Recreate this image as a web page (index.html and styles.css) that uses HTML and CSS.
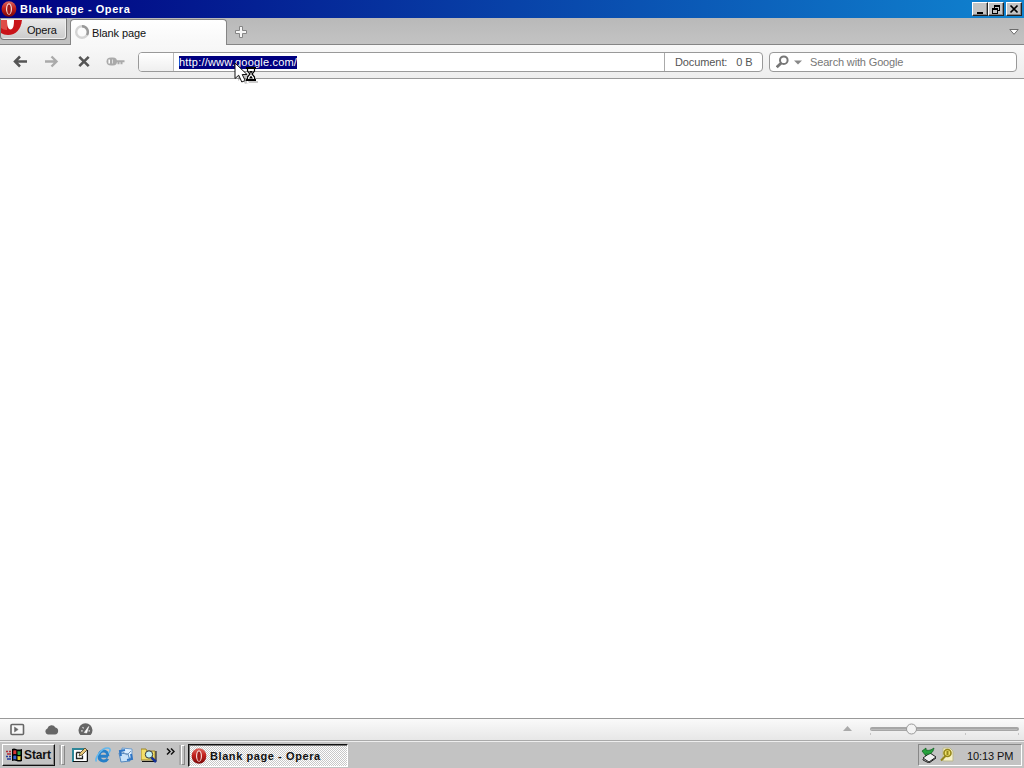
FILE: index.html
```html
<!DOCTYPE html>
<html lang="en">
<head>
  <meta charset="UTF-8">
  <title>Blank page - Opera</title>
  <link rel="stylesheet" href="styles.css">
</head>
<body>
  <svg width="0" height="0" class="defs">
    <defs>
      <linearGradient id="red" x1="0" y1="0" x2="0" y2="1">
        <stop offset="0" stop-color="#dc6860"/><stop offset=".45" stop-color="#c3201d"/><stop offset="1" stop-color="#790808"/>
      </linearGradient>
      <symbol id="opera" viewBox="0 0 16 16">
        <ellipse cx="8" cy="8" rx="7.4" ry="7.7" fill="url(#red)"/>
        <ellipse cx="8" cy="8" rx="3" ry="5.8" fill="#f5dcda"/>
        <ellipse cx="8" cy="8.3" rx="1.8" ry="4.8" fill="#a51a18"/>
      </symbol>
    </defs>
  </svg>

  <div class="titlebar">
    <svg class="title-icon" width="16" height="16"><use href="#opera"/></svg>
    <span class="title-text">Blank page - Opera</span>
    <div class="win-buttons">
      <span class="win-btn"><svg width="12" height="10" shape-rendering="crispEdges"><path d="M3 8h6v2H3z"/></svg></span>
      <span class="win-btn"><svg width="12" height="10" shape-rendering="crispEdges"><path d="M4 1h6v6H8V6h1V3H5v1H4zM2 4h6v6H2zM3 6v3h4V6z" fill-rule="evenodd"/></svg></span>
      <span class="win-btn close"><svg width="12" height="10"><path d="M2.5 1.5l7 7M9.5 1.5l-7 7" stroke="#000" stroke-width="1.7"/></svg></span>
    </div>
  </div>

  <div class="tabbar">
    <div class="opera-menu">
      <svg width="22" height="17"><path d="M0 1h21C20 10 15 16 7 16 4 16 2 15 0 14z" fill="#c91419"/><path d="M0 1h6v10c-3 0-4-1-6-2z" fill="#df4c48"/><path d="M6 1h7c0 6-1 9.500-3.500 9.500S6 7 6 1z" fill="#fff"/></svg>
      <span>Opera</span>
    </div>
    <div class="tab">
      <svg width="16" height="16"><circle cx="7" cy="7" r="5.8" fill="none" stroke="#d4d4d4" stroke-width="2.4"/><path d="M7 1.2A5.8 5.8 0 0 1 12 10" fill="none" stroke="#999" stroke-width="2.4"/></svg>
      <span>Blank page</span>
    </div>
    <svg class="new-tab" width="14" height="14"><path d="M5.500 1.500h3v4h4v3h-4v4h-3v-4h-4v-3h4z" fill="#f5f5f5" stroke="#858585"/></svg>
    <svg class="tab-menu" width="10" height="8"><path d="M.8 1.500h8.400L5 6.300z" fill="#fff" stroke="#6c6c6c"/></svg>
  </div>

  <div class="toolbar">
    <div class="nav">
      <svg width="16" height="14"><path d="M15 6.500H3M8 1.500l-5 5 5 5" fill="none" stroke="#555" stroke-width="2.500"/></svg>
      <svg width="16" height="14"><path d="M1 6.500h11M7.500 1.500l5 5-5 5" fill="none" stroke="#aaa" stroke-width="2.400"/></svg>
      <svg width="16" height="14"><path d="M4.300 1.800l9.400 9.400M13.700 1.800l-9.400 9.400" stroke="#555" stroke-width="2.600"/></svg>
      <svg width="20" height="14"><path d="M6 2.500h2q4 0 4 4t-4 4H6Q1.500 10.500 1.500 6.500t4.500-4z" fill="#aaa"/><path d="M4.200 4.500v4" stroke="#fff" stroke-width="1.500"/><path d="M7.500 4.500v4" stroke="#ddd"/><path d="M10 6.300h9.500M13.500 6.500v2.700M16.500 6.500v2.700" stroke="#aaa" stroke-width="2"/></svg>
    </div>
    <div class="address">
      <span class="badge"></span>
      <span class="url"><span class="selected">http://www.google.com/</span></span>
      <span class="progress"><span>Document:</span><span>0 B</span></span>
    </div>
    <div class="search">
      <svg width="14" height="14"><circle cx="7.800" cy="5.200" r="3.800" fill="none" stroke="#777" stroke-width="2"/><path d="M5.200 8L.7 12.300" stroke="#777" stroke-width="2.800"/></svg>
      <svg class="drop" width="8" height="5"><path d="M0 .5h8L4 4.500z" fill="#888"/></svg>
      <span>Search with Google</span>
    </div>
  </div>

  <div class="page"></div>

  <div class="statusbar">
    <svg width="15" height="13"><rect x="1" y="1.500" width="12.500" height="10" rx="1" fill="#f8f8f8" stroke="#666" stroke-width="1.600"/><path d="M4.500 4v5l3.700-2.500z" fill="#666" stroke="#777" stroke-width=".6"/></svg>
    <svg width="15" height="13"><path d="M3.800 11.500a3.200 3.200 0 0 1-.4-6.100 4.300 4.300 0 0 1 8-.8 3.500 3.500 0 0 1-.4 6.900z" fill="#666"/></svg>
    <svg width="15" height="13"><path d="M2.400 12A7 7 0 1 1 12.600 12z" fill="#666"/><path d="M3 7.800h1.800M4.500 4.200l1.200 1.200M10.500 7.800H12" stroke="#ddd" stroke-width="1.200"/><path d="M6.300 9.500l4.400-6-2 6.500z" fill="#fff" stroke="#fff" stroke-width=".6"/></svg>
    <svg class="zoom" width="181" height="20"><path d="M3 12h9L7.500 7z" fill="#aaa"/><rect x="30" y="8" width="149" height="4" rx="2" fill="#a6a6a6"/><path d="M31 10.500h146" stroke="#bbb"/><path d="M30.500 14v2M125.500 14v2M178.500 14v2" stroke="#c5c5c5"/><circle cx="71.500" cy="10" r="5" fill="#f3f3f3" stroke="#999"/></svg>
  </div>

  <div class="taskbar">
    <div class="start">
      <svg width="17" height="16"><path d="M6 2q2-1 4 0t6 0v12q-3 1-5.500 0T6 14z" fill="#000"/><path d="M7.300 3.500q1.500-.7 3 0v3.800q-1.500-.5-3 0z" fill="#d93535"/><path d="M11.500 3.900q1.500.6 3 .1v3.700q-1.500.5-3 0z" fill="#28a04b"/><path d="M7.300 8.800q1.500-.5 3 0v3.800q-1.500-.5-3 0z" fill="#3562d4"/><path d="M11.500 9q1.500.6 3 .1v3.700q-1.500.5-3 0z" fill="#e8cc30"/><path d="M0 4.500h2M3 4.500h2M1 7h4" stroke="#b42b35" stroke-width="1.500"/><path d="M0 9.500h2M3 9.500h2M1 12h4" stroke="#283d9c" stroke-width="1.500"/></svg>
      <span>Start</span>
    </div>
    <span class="grip"></span>
    <div class="quick">
      <svg width="16" height="16"><path d="M0 1h12v14H0z" fill="#2e8698"/><path d="M2 3h12v11H2z" fill="#fff"/><path d="M1 14.500h14.500V3" fill="none" stroke="#111"/><path d="M4.500 5.500v6h6v-3M4.500 5.500h4" fill="none" stroke="#222" stroke-width="1.300"/><path d="M7 9l1-3 5-5 2 2-5 5z" fill="#eac979" stroke="#413720" stroke-width=".8"/></svg>
      <svg width="16" height="16"><path d="M13 9.300H4.500M13 9.300c0-7-9-7-9 0 0 5.500 6.500 6 8.800 2.400" fill="none" stroke="#267fc8" stroke-width="2.900"/><path d="M1.500 14.500C-1 12 7-1 14 1.200c2 1 1 3-.5 5" fill="none" stroke="#61b7ee" stroke-width="1.500"/></svg>
      <svg width="16" height="16"><path d="M4 1l10 1v9H4z" fill="#dceeff" stroke="#6e9ccc"/><path d="M1 6l9 1 2 7-9 1z" fill="#c8e1f8" stroke="#5288c0"/><path d="M7 3L2 4l1 5M9 13l5-1-1-5" fill="none" stroke="#2e75c5" stroke-width="2"/><path d="M5 5l4 3 4-4" fill="none" stroke="#7798bd"/></svg>
      <svg width="16" height="16"><path d="M0 2h5l1 2h8v9H0z" fill="#f3df68" stroke="#9b852b"/><path d="M1 14.500h14V4" fill="none" stroke="#111"/><path d="M10 10l5 5" stroke="#163399" stroke-width="2.500"/><circle cx="8" cy="7.500" r="3.700" fill="#c5f1f4" stroke="#333"/></svg>
      <svg class="more" width="9" height="7"><path d="M1 .5l3 3-3 3M5 .5l3 3-3 3" fill="none" stroke="#111" stroke-width="1.500"/></svg>
    </div>
    <span class="grip second"></span>
    <div class="task">
      <svg width="16" height="16"><use href="#opera"/></svg>
      <span>Blank page - Opera</span>
    </div>
    <div class="tray">
      <svg width="16" height="16"><path d="M2 11l7-5 6 4-7 5z" fill="#eee" stroke="#222"/><path d="M2 12v1l6 3 7-5" fill="none" stroke="#222"/><path d="M1 4l4-3v2c3 1 5 0 8-2-1 5-4 7-8 6v2z" fill="#27a23d" stroke="#075b19" stroke-width=".7"/></svg>
      <svg width="16" height="16"><path d="M4 1h7l3 3v10H4z" fill="#f6f1c5" stroke="#bcb991"/><circle cx="8.500" cy="6" r="3.500" fill="#eee06a" stroke="#95871b" stroke-width="1.600"/><path d="M6.500 9L2 13.500M8.500 4v4" stroke="#94861b" stroke-width="2"/></svg>
      <span class="clock">10:13 PM</span>
    </div>
  </div>

  <!-- busy pointer -->
  <svg class="cursor" width="25" height="23"><path d="M4 4v15l4-3 3 6 4-1-3-6h5zM13 19h11v2H13z" fill="#666" opacity=".35"/><path d="M1 1v15.500l3.700-3.300L7.800 20l3.400-1.500-3-6H13z" fill="#fff" stroke="#111"/><path d="M12 6h10M12 18h10" stroke="#000" stroke-width="2"/><path d="M13.500 6.500v2.500l2.500 3-2.500 3v2.500h7V15L18 12l2.500-3V6.500z" fill="#fff" stroke="#000" stroke-width="1.200"/><path d="M15 9h4L17 11.500zM17 13.500l2 3h-4z"/></svg>
</body>
</html>
```
FILE: styles.css
```css
* {
  box-sizing: border-box;
}
body {
  margin: 0;
  width: 1024px;
  height: 768px;
  overflow: hidden;
  display: flex;
  flex-direction: column;
  background: #fff;
  font: 11px "Liberation Sans", Arial, sans-serif;
  color: #111;
  white-space: nowrap;
}
svg {
  display: block;
  flex: none;
}
.defs {
  position: absolute;
}
.titlebar {
  height: 18px;
  display: flex;
  align-items: center;
  padding: 0 2px 0 1px;
  background: linear-gradient(90deg, #000080, #1084d0);
  color: #fff;
}
.title-text {
  margin-left: 3px;
  font-weight: bold;
  letter-spacing: 0.56px;
}
.win-buttons {
  display: flex;
  margin-left: auto;
}
.win-btn {
  width: 16px;
  height: 14px;
  padding: 1px;
  background: #c4c4c4;
  border: 1px solid;
  border-color: #fff #222 #222 #fff;
  box-shadow: inset -1px -1px #888;
}
.close {
  margin-left: 2px;
}
.tabbar {
  height: 27px;
  display: flex;
  background: linear-gradient(#b9b9b9, #c3c3c3);
  border-bottom: 1px solid #858585;
}
.opera-menu {
  width: 67px;
  height: 22px;
  display: flex;
  background: linear-gradient(#e9e9e9, #cbcbcb);
  border: 1px solid #777;
  border-top-color: #aaa;
  border-radius: 0 0 4px 4px;
  box-shadow: inset -1px -1px #eee;
}
.opera-menu span {
  margin-left: 4px;
  line-height: 22px;
  letter-spacing: -0.2px;
}
.tab {
  width: 157px;
  height: 27px;
  margin: 1px 0 0 3px;
  padding: 5px 0 0 4px;
  display: flex;
  background: linear-gradient(#fff, #f7f7f7);
  border: 1px solid #858585;
  border-bottom: 0;
  border-radius: 4px 4px 0 0;
}
.tab span {
  margin-left: 1px;
  line-height: 17px;
  letter-spacing: -0.1px;
}
.new-tab {
  margin: 7px 0 0 7px;
}
.tab-menu {
  margin: 10px 5px 0 auto;
}
.toolbar {
  height: 34px;
  display: flex;
  padding: 7px 7px 0 12px;
  background: linear-gradient(#f8f8f8, #ededed);
  border-bottom: 1px solid #999;
}
.nav {
  width: 126px;
  display: flex;
  gap: 16px;
  padding-top: 3px;
}
.nav svg:nth-child(4) {
  margin-left: -2px;
}
.nav svg:nth-child(2) {
  margin-right: -1px;
}
.address {
  width: 625px;
  height: 20px;
  display: flex;
  background: #fff;
  border: 1px solid #999;
  border-radius: 4px;
  overflow: hidden;
}
.badge {
  width: 35px;
  background: linear-gradient(#fff, #efefef);
  border-right: 1px solid #bbb;
}
.url {
  flex: 1;
  padding: 3px 0 0 5px;
}
.selected {
  display: block;
  width: 118px;
  height: 13px;
  line-height: 13px;
  letter-spacing: 0.2px;
  background: #000080;
  color: #fff;
}
.progress {
  width: 98px;
  display: flex;
  gap: 9px;
  padding-left: 10px;
  line-height: 19px;
  letter-spacing: -0.1px;
  border-left: 1px solid #aaa;
  color: #555;
}
.search {
  width: 248px;
  height: 20px;
  display: flex;
  margin-left: 6px;
  padding: 2px 0 0 6px;
  background: #fff;
  border: 1px solid #999;
  border-radius: 4px;
  color: #777;
}
.search .drop {
  margin: 5px 8px 0 4px;
}
.search span {
  line-height: 15px;
  letter-spacing: -0.15px;
}
.page {
  flex: 1;
}
.statusbar {
  height: 23px;
  display: flex;
  gap: 19px;
  padding: 4px 0 0 10px;
  background: linear-gradient(#fafafa, #e7e7e7);
  border-top: 1px solid #999;
  border-bottom: 1px solid #aaa;
}
.statusbar .zoom {
  margin: -4px 3px 0 auto;
}
.taskbar {
  height: 27px;
  display: flex;
  align-items: flex-start;
  padding: 2px 2px 0 2px;
  background: #c3c3c3;
  border-top: 1px solid #eee;
}
.start {
  width: 53px;
  height: 22px;
  display: flex;
  align-items: center;
  padding-left: 3px;
  border: 1px solid;
  border-color: #fff #111 #111 #fff;
  box-shadow: inset -1px -1px #888;
  font-size: 12px;
  font-weight: bold;
}
.start span {
  margin-left: 1px;
  letter-spacing: -0.1px;
}
.grip {
  width: 4px;
  height: 20px;
  margin: 1px 0 0 6px;
  border: 1px solid;
  border-color: #fff #888 #888 #fff;
  box-shadow: -2px 0 #aaa;
}
.quick {
  display: flex;
  gap: 7px;
  padding: 3px 0 0 7px;
  width: 115px;
}
.more {
  margin: 1px 0 0 2px;
}
.second {
  margin-left: 1px;
}
.task {
  width: 160px;
  height: 23px;
  display: flex;
  align-items: center;
  margin-left: 3px;
  padding: 1px 0 0 2px;
  background: repeating-conic-gradient(#fff 0 25%, #c8c8c8 0 50%) 0 0 / 2px 2px;
  border: 1px solid;
  border-color: #111 #fff #fff #111;
  box-shadow: inset 1px 1px #777;
  font-weight: bold;
}
.task span {
  margin-left: 3px;
  letter-spacing: 0.58px;
}
.tray {
  width: 104px;
  height: 22px;
  display: flex;
  align-items: center;
  gap: 2px;
  margin-left: auto;
  padding-left: 2px;
  border: 1px solid;
  border-color: #888 #fff #fff #888;
}
.clock {
  margin: 2px 0 0 10px;
  letter-spacing: -0.1px;
}
.cursor {
  position: absolute;
  left: 234px;
  top: 62px;
}
```
